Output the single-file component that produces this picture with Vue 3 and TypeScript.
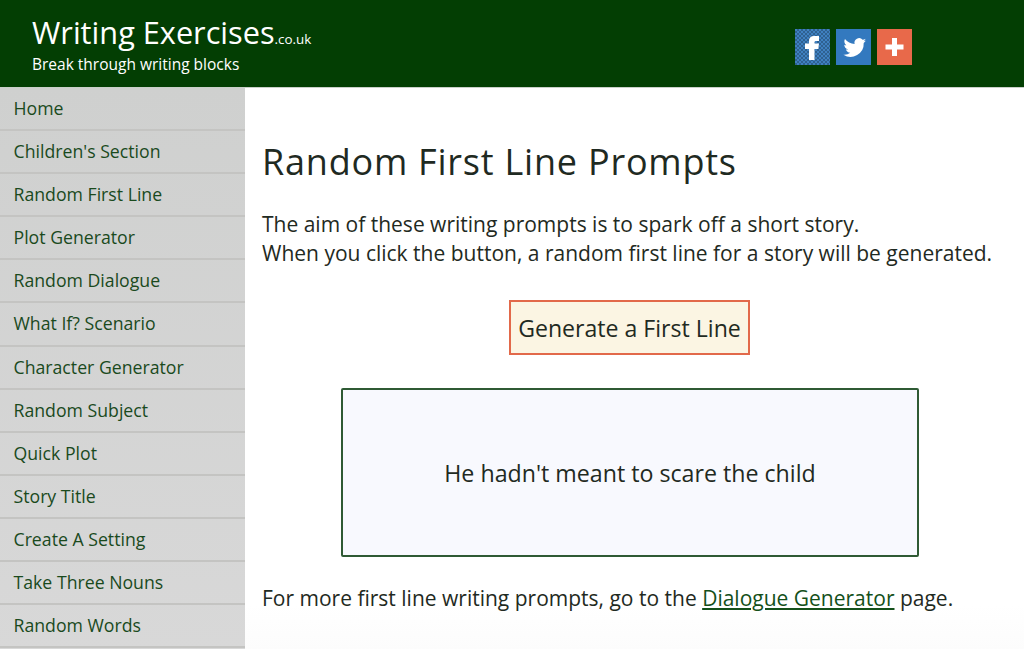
<template>
  <div class="page">
    <header class="top">
      <div class="brand">
        <div class="logo">Writing Exercises<small>.co.uk</small></div>
        <div class="tagline">Break through writing blocks</div>
      </div>
      <div class="social">
        <a class="icon fb" href="#" aria-label="Facebook">
          <svg viewBox="0 0 35 36" width="35" height="36"><path fill="#fff" d="M14 31V20h-4v-5.500h4V12c0-3.200 2-5 5-5h5v5h-3c-1 0-1.500.5-1.500 1.500v1h4.500l-.7 5.500h-3.800v11z"/></svg>
        </a>
        <a class="icon tw" href="#" aria-label="Twitter">
          <svg viewBox="-1.100 -0.800 25 25.700" width="35" height="36"><path fill="#fff" d="M20.500 7.400c-.6.3-1.200.4-1.900.5.700-.4 1.200-1 1.400-1.800-.6.400-1.300.6-2.100.8a3.300 3.300 0 0 0-5.700 3c-2.800-.1-5.200-1.500-6.900-3.500-.9 1.500-.4 3.400 1 4.400-.5 0-1-.2-1.500-.4 0 1.600 1.100 3 2.700 3.300-.5.100-1 .2-1.500.1.400 1.300 1.600 2.300 3.100 2.300a6.700 6.700 0 0 1-4.900 1.400 9.400 9.400 0 0 0 14.500-8.300c.6-.5 1.200-1.100 1.600-1.800z"/></svg>
        </a>
        <a class="icon plus" href="#" aria-label="More">
          <svg viewBox="0 0 35 36" width="35" height="36"><path fill="#fff" d="M15 9h5v6.500h6.500v5H20V27h-5v-6.500H8.500v-5H15z"/></svg>
        </a>
      </div>
    </header>

    <div class="body">
      <nav class="side">
        <a v-for="item in menu" :key="item" href="#">{{ item }}</a>
      </nav>
      <main class="content">
        <h1>Random First Line Prompts</h1>
        <p class="intro">
          The aim of these writing prompts is to spark off a short story.<br />
          When you click the button, a random first line for a story will be generated.
        </p>
        <div class="action">
          <button type="button">Generate a First Line</button>
        </div>
        <div class="result">He hadn't meant to scare the child</div>
        <p class="more">
          For more first line writing prompts, go to the <a href="#">Dialogue Generator</a> page.
        </p>
      </main>
    </div>
  </div>
</template>

<script setup lang="ts">
const menu: string[] = [
  'Home',
  "Children's Section",
  'Random First Line',
  'Plot Generator',
  'Random Dialogue',
  'What If? Scenario',
  'Character Generator',
  'Random Subject',
  'Quick Plot',
  'Story Title',
  'Create A Setting',
  'Take Three Nouns',
  'Random Words',
]
</script>

<style>
html,
body {
  margin: 0;
  background: #fff;
  overflow: hidden;
}
</style>

<style scoped>
.page {
  height: 649px;
  overflow: hidden;
  font-family: 'Open Sans', 'Liberation Sans', sans-serif;
  color: #1f2a22;
}

.top {
  display: flex;
  justify-content: space-between;
  height: 87px;
  padding: 0 112px 0 32px;
  background: #033e03;
  border-bottom: 1px solid #c9d0c9;
  color: #fff;
}

.logo {
  margin-top: 10px;
  font-size: 30.7px;
  line-height: 44px;
}

.logo small {
  font-size: 13.4px;
  line-height: 1;
}

.tagline {
  font-size: 15.5px;
  line-height: 20px;
}

.social {
  display: flex;
  gap: 6px;
  padding-top: 29px;
}

.icon {
  display: block;
  width: 35px;
  height: 36px;
}

.icon svg {
  display: block;
}

/* the reference icon is visibly dithered */
.fb {
  background: repeating-conic-gradient(#2f6191 0 25%, #3f80c0 0 50%) 0 0 / 4px 4px;
}

.tw {
  background: #3379bf;
}

.plus {
  background: #e8694a;
}

.body {
  display: flex;
}

.side {
  flex: 0 0 245px;
  background: linear-gradient(#cfd0cf, #d8d8d8);
}

.side a {
  display: block;
  box-sizing: border-box;
  height: 43.1px;
  padding-left: 13.5px;
  border-bottom: 2px solid #c4c4c2;
  font-size: 17.7px;
  line-height: 41px;
  color: #1a4a1d;
  text-decoration: none;
}

.content {
  flex: 1;
  height: 562px;
  padding: 0 27px 0 17px;
  background: linear-gradient(#fff 92%, #fcfcfc);
}

h1 {
  margin: 51px 0 0;
  font-size: 36px;
  font-weight: 400;
  line-height: 46px;
  letter-spacing: 0.78px;
}

.intro,
.more {
  font-size: 21px;
  line-height: 29px;
}

.intro {
  margin: 25px 0 0;
}

.action {
  display: flex;
  justify-content: center;
  margin-top: 32px;
}

button {
  width: 241px;
  height: 55px;
  padding: 0;
  background: #fbf5e3;
  border: 2px solid #e2694a;
  font: inherit;
  font-size: 23.1px;
  color: #1f2a22;
}

.result {
  display: flex;
  align-items: center;
  justify-content: center;
  box-sizing: border-box;
  width: 578px;
  height: 169px;
  margin: 33px 0 0 79px;
  background: #f8f9fe;
  border: 2px solid #2f5a34;
  border-radius: 2px;
  font-size: 23.2px;
}

.more {
  margin: 27px 0 0;
}

.more a {
  color: #14501a;
  text-decoration: underline;
}
</style>
